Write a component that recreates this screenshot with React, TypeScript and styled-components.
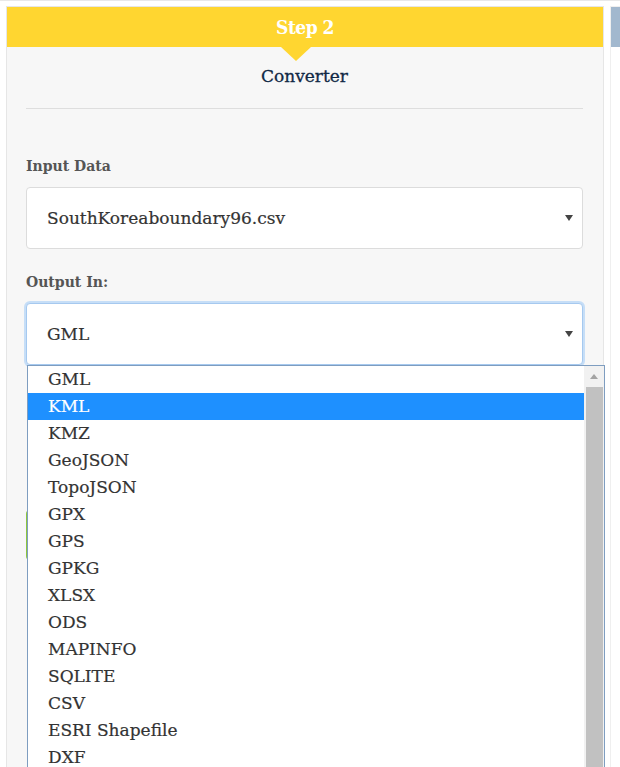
import React from "react";
import styled, { createGlobalStyle } from "styled-components";

const GlobalStyle = createGlobalStyle`
  html, body {
    margin: 0;
    padding: 0;
    background: #fff;
    overflow: hidden;
  }
  body {
    font-family: "DejaVu Serif", "Liberation Serif", serif;
  }
`;

const Page = styled.div`
  display: flex;
  gap: 6px;
  padding: 5px 0 0 6px;
  border-top: 1px solid #e8e8e8;
  width: 960px;
`;

const Panel = styled.div`
  flex: 0 0 598px;
  box-sizing: border-box;
  min-height: 820px;
  border: 1px solid #e6e6e6;
  background: #f7f7f7;
`;

const NextPanel = styled.div`
  flex: 0 0 300px;
  box-sizing: border-box;
  min-height: 820px;
  border: 1px solid #efefef;
  background: #fff;
`;

const Header = styled.div<{ $color: string }>`
  position: relative;
  height: 40px;
  line-height: 40px;
  background: ${(p) => p.$color};
  color: #fff;
  font-family: "DejaVu Serif Condensed", "DejaVu Serif", serif;
  font-stretch: condensed;
  font-weight: bold;
  font-size: 19px;
  letter-spacing: -0.5px;
  text-align: center;
`;

const Pointer = styled.span`
  position: absolute;
  top: 100%;
  left: 274px;
  width: 0;
  height: 0;
  border-left: 15px solid transparent;
  border-right: 15px solid transparent;
  border-top: 14px solid #ffd630;
`;

const Body = styled.div`
  padding: 0 20px 0 19px;
`;

const Title = styled.div`
  margin-top: 17px;
  line-height: 24px;
  font-size: 17px;
  color: #102845;
  text-align: center;
  -webkit-text-stroke: 0.3px #102845;
`;

const Divider = styled.div`
  margin-top: 20px;
  height: 1px;
  background: #dedede;
`;

const Field = styled.div<{ $top: number }>`
  position: relative;
  margin-top: ${(p) => p.$top}px;
`;

const Label = styled.div`
  line-height: 20px;
  font-size: 14px;
  font-weight: bold;
  color: #555;
  margin-bottom: 11px;
`;

const Select = styled.div<{ $focused?: boolean }>`
  display: flex;
  align-items: center;
  justify-content: space-between;
  box-sizing: border-box;
  height: 62px;
  padding: 0 9px 0 20px;
  background: #fff;
  border: 1px solid ${(p) => (p.$focused ? "#a6c9ef" : "#dcdcdc")};
  border-radius: 4px;
  box-shadow: ${(p) => (p.$focused ? "0 0 0 2px #c6def7" : "none")};
  font-size: 17px;
  color: #333;
  -webkit-text-stroke: 0.2px #333;
`;

const Caret = styled.span`
  width: 0;
  height: 0;
  border-left: 4px solid transparent;
  border-right: 4px solid transparent;
  border-top: 6px solid #444;
`;

const Dropdown = styled.div`
  position: absolute;
  top: 100%;
  left: 1px;
  z-index: 5;
  display: flex;
  box-sizing: border-box;
  width: 578px;
  height: 430px;
  background: #fff;
  border: 1px solid #7e9dc0;
`;

const List = styled.div`
  flex: 1;
`;

const Option = styled.div<{ $active?: boolean }>`
  height: 27px;
  line-height: 27px;
  padding-left: 20px;
  font-size: 17px;
  color: ${(p) => (p.$active ? "#fff" : "#333")};
  -webkit-text-stroke: 0.2px ${(p) => (p.$active ? "#fff" : "#333")};
  background: ${(p) => (p.$active ? "#1e90ff" : "transparent")};
  white-space: nowrap;
`;

const Scrollbar = styled.div`
  display: flex;
  flex-direction: column;
  width: 20px;
  background: #f1f1f1;
`;

const ArrowBox = styled.div`
  display: flex;
  align-items: center;
  justify-content: center;
  height: 21px;
`;

const UpArrow = styled.span`
  width: 0;
  height: 0;
  border-left: 4px solid transparent;
  border-right: 4px solid transparent;
  border-bottom: 5px solid #a3a3a3;
`;

const Thumb = styled.div`
  flex: 1;
  margin: 0 1px 0 2px;
  background: #c1c1c1;
`;

const GoButton = styled.div`
  margin-top: 145px;
  height: 50px;
  border-radius: 4px;
  background: #8dc63f;
`;

const formats = [
  "GML",
  "KML",
  "KMZ",
  "GeoJSON",
  "TopoJSON",
  "GPX",
  "GPS",
  "GPKG",
  "XLSX",
  "ODS",
  "MAPINFO",
  "SQLITE",
  "CSV",
  "ESRI Shapefile",
  "DXF",
];

const App: React.FC = () => {
  return (
    <>
      <GlobalStyle />
      <Page>
        <Panel>
          <Header $color="#ffd630">
            Step 2
            <Pointer />
          </Header>
          <Body>
            <Title>Converter</Title>
            <Divider />
            <Field $top={47}>
              <Label>Input Data</Label>
              <Select>
                <span>SouthKoreaboundary96.csv</span>
                <Caret />
              </Select>
            </Field>
            <Field $top={23}>
              <Label>Output In:</Label>
              <Select $focused>
                <span>GML</span>
                <Caret />
              </Select>
              <Dropdown>
                <List>
                  {formats.map((f) => (
                    <Option key={f} $active={f === "KML"}>
                      {f}
                    </Option>
                  ))}
                </List>
                <Scrollbar>
                  <ArrowBox>
                    <UpArrow />
                  </ArrowBox>
                  <Thumb />
                </Scrollbar>
              </Dropdown>
            </Field>
            <GoButton />
          </Body>
        </Panel>
        <NextPanel>
          <Header $color="#a2b8ce" />
        </NextPanel>
      </Page>
    </>
  );
};

export default App;
